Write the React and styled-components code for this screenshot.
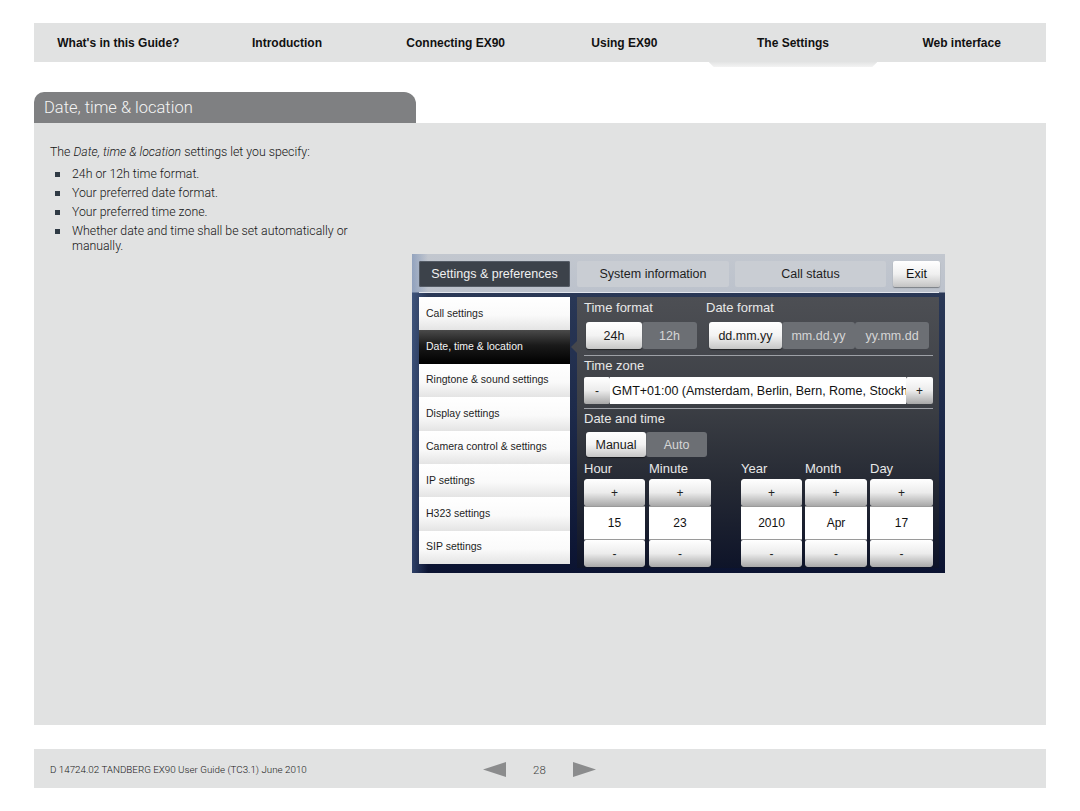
import React from 'react';
import styled, { createGlobalStyle, css } from 'styled-components';

const Global = createGlobalStyle`
  html, body { margin: 0; padding: 0; background: #ffffff; }
  body { font-family: "Liberation Sans", Arial, sans-serif; }
  * { box-sizing: border-box; }
`;

const Page = styled.div`
  width: 1046px;
  padding: 23px 0 0 34px;
`;

const Nav = styled.nav`
  display: grid;
  grid-template-columns: repeat(6, 1fr);
  height: 39px;
  background: #e1e2e2;
`;

const NavItem = styled.div`
  position: relative;
  display: flex;
  align-items: center;
  justify-content: center;
  padding-top: 1px;
  font-weight: 700;
  font-size: 12px;
  color: #111;
  ${p => p.$active && css`
    &::after {
      content: '';
      position: absolute;
      left: 0;
      right: 0;
      top: 100%;
      height: 5px;
      background: linear-gradient(#e3e4e4, #f3f3f3);
      clip-path: polygon(0 0, 100% 0, 97% 100%, 3% 100%);
    }
  `}
`;

const SectionTab = styled.h1`
  margin: 30px 0 0;
  width: 382px;
  height: 31px;
  padding: 0 10px;
  display: flex;
  align-items: center;
  background: #7f8082;
  color: #f4f4f4;
  border-radius: 10px 12px 0 0;
  font-family: Roboto, "Liberation Sans", sans-serif;
  font-weight: 300;
  font-size: 16.5px;
`;

const Panel = styled.section`
  height: 602px;
  background: #e1e2e2;
  display: grid;
  grid-template-columns: 362px 533px;
  align-items: start;
  padding: 22px 0 0 16px;
`;

const Intro = styled.div`
  font-family: Roboto, "Liberation Sans", sans-serif;
  font-weight: 300;
  font-size: 12.3px;
  line-height: 15px;
  color: #141414;
  width: 320px;
`;

const Lead = styled.p`
  margin: 0 0 7px;
`;

const Bullets = styled.ul`
  list-style: none;
  margin: 0;
  padding: 0;
`;

const Bullet = styled.li`
  position: relative;
  padding-left: 22px;
  margin-bottom: 4px;
  &::before {
    content: '';
    position: absolute;
    left: 5px;
    top: 5px;
    width: 4.5px;
    height: 4.5px;
    background: #2f3a44;
  }
`;

/* ---------- device screenshot ---------- */

const Screen = styled.div`
  margin-top: 109px;
  width: 533px;
  height: 319px;
  display: flex;
  flex-direction: column;
  background:
    linear-gradient(90deg, rgba(90, 120, 170, 0.45), rgba(90, 120, 170, 0) 3%),
    linear-gradient(180deg, #c2c7cf 0px, #bcc2cc 38px, #2a3856 39px, #1d2a4a 50%, #0b1331 100%);
  font-family: "Liberation Sans", Arial, sans-serif;
`;

const TopBar = styled.div`
  height: 38px;
  display: flex;
  gap: 6px;
  padding: 7px 5px 0 7px;
`;

const TopTab = styled.div`
  height: 26px;
  width: ${p => p.$w}px;
  margin-left: ${p => p.$ml || 0}px;
  display: flex;
  align-items: center;
  justify-content: center;
  font-size: 12.5px;
  border-radius: 2px;
  ${p => p.$variant === 'active' && css`
    background: #3c424a;
    color: #f0f0f0;
    box-shadow: inset 0 0 0 1px #555c66;
  `}
  ${p => p.$variant === 'normal' && css`
    background: #c9cdd3;
    color: #1e1e1e;
  `}
  ${p => p.$variant === 'exit' && css`
    background: linear-gradient(#ffffff, #f0f0f0 50%, #c4c4c4);
    color: #111;
    box-shadow: 0 1px 1px rgba(0, 0, 0, 0.35);
  `}
`;

const TopRule = styled.div`
  height: 1px;
  margin: 0 6px 0 7px;
  background: #e4e7ee;
`;

const Body = styled.div`
  display: flex;
  gap: 7px;
  padding: 4px 6px 0 7px;
`;

const SideList = styled.div`
  width: 151px;
  height: 267px;
  display: flex;
  flex-direction: column;
`;

const SideItem = styled.div`
  flex: 1;
  display: flex;
  align-items: center;
  padding: 0 7px 2px;
  font-size: 10.5px;
  ${p => p.$selected ? css`
    background: linear-gradient(#4a4a4a, #1a1a1a 45%, #000000);
    color: #f4f4f4;
  ` : css`
    background: linear-gradient(#ffffff, #fafafa 55%, #e4e4e4);
    color: #1e1e1e;
  `}
`;

const Settings = styled.div`
  position: relative;
  width: 362px;
  height: 271px;
  padding: 3px 6px 0 7px;
  background: linear-gradient(180deg, #4d4f54 0%, #3c3f45 40%, #262a34 68%, #0e1429 100%);
  &::before {
    content: '';
    position: absolute;
    left: -6px;
    top: 44px;
    border-style: solid;
    border-width: 6px 6px 6px 0;
    border-color: transparent #45474c transparent transparent;
  }
`;

const Label = styled.div`
  height: 16px;
  line-height: 16px;
  font-size: 13px;
  color: #e8e8e8;
  margin-top: ${p => p.$mt || 0}px;
`;

const FormatRow = styled.div`
  display: grid;
  grid-template-columns: 122px 1fr;
`;

const Toggle = styled.div`
  display: flex;
  margin-top: ${p => p.$mt}px;
  margin-left: ${p => p.$ml || 2}px;
  height: ${p => p.$h}px;
`;

const Opt = styled.div`
  width: ${p => p.$w}px;
  display: flex;
  align-items: center;
  justify-content: center;
  font-size: 12.5px;
  border-radius: 3px;
  ${p => p.$on ? css`
    background: linear-gradient(#ffffff, #f3f3f3 50%, #c6c6c6);
    color: #1a1a1a;
    box-shadow: 0 1px 1px rgba(0, 0, 0, 0.5);
    position: relative;
  ` : css`
    background: #6c6f74;
    color: #d6d6d6;
  `}
`;

const Divider = styled.div`
  height: 1px;
  margin-top: ${p => p.$mt}px;
  background: #9da0a6;
`;

const ZoneRow = styled.div`
  display: flex;
  height: 27px;
  margin-top: 3px;
`;

const StepBtn = styled.div`
  flex: none;
  width: ${p => p.$w}px;
  height: ${p => p.$h || 27}px;
  display: flex;
  align-items: center;
  justify-content: center;
  font-size: 12px;
  color: #222;
  background: linear-gradient(#ffffff, #ececec 50%, #a8a8a8);
  border-radius: 2px;
`;

const ZoneField = styled.div`
  flex: none;
  width: 296px;
  padding: 0 2px;
  display: flex;
  align-items: center;
  background: #ffffff;
  font-size: 12.5px;
  color: #111;
  white-space: nowrap;
  overflow: hidden;
`;

const Spinners = styled.div`
  display: flex;
  margin-top: 4px;
`;

const SpinCol = styled.div`
  width: ${p => p.$w}px;
  margin-left: ${p => p.$ml || 0}px;
  display: flex;
  flex-direction: column;
`;

const SpinStack = styled.div`
  margin-top: 2px;
  display: flex;
  flex-direction: column;
  border-radius: 3px;
  overflow: hidden;
`;

const SpinValue = styled.div`
  height: 34px;
  display: flex;
  align-items: center;
  justify-content: center;
  background: #ffffff;
  font-size: 12px;
  color: #111;
  border-top: 1px solid #9a9a9a;
  border-bottom: 1px solid #9a9a9a;
`;

/* ---------- footer ---------- */

const Footer = styled.footer`
  margin-top: 24px;
  height: 39px;
  background: #e1e2e2;
  display: flex;
  align-items: center;
  padding: 2px 0 0 16px;
`;

const FootText = styled.div`
  width: 433px;
  font-family: Roboto, "Liberation Sans", sans-serif;
  font-weight: 300;
  font-size: 9.8px;
  color: #1a1a1a;
`;

const Pager = styled.div`
  display: flex;
  align-items: center;
  gap: 27px;
  font-family: Roboto, "Liberation Sans", sans-serif;
  font-weight: 300;
  font-size: 11.5px;
  color: #444;
`;

const Arrow = ({ dir }) => (
  <svg width="23" height="15" viewBox="0 0 23 15">
    {dir === 'left'
      ? <polygon points="0,7.5 23,0 23,15" fill="#8b8c8d" />
      : <polygon points="23,7.5 0,0 0,15" fill="#8b8c8d" />}
  </svg>
);

const navItems = ["What's in this Guide?", 'Introduction', 'Connecting EX90', 'Using EX90', 'The Settings', 'Web interface'];
const sideItems = ['Call settings', 'Date, time & location', 'Ringtone & sound settings', 'Display settings', 'Camera control & settings', 'IP settings', 'H323 settings', 'SIP settings'];
const spinCols = [
  { label: 'Hour', value: '15', w: 61, ml: 0 },
  { label: 'Minute', value: '23', w: 62, ml: 4 },
  { label: 'Year', value: '2010', w: 61, ml: 30 },
  { label: 'Month', value: 'Apr', w: 62, ml: 3 },
  { label: 'Day', value: '17', w: 63, ml: 3 },
];

export default function App() {
  return (
    <Page>
      <Global />
      <Nav>
        {navItems.map(n => (
          <NavItem key={n} $active={n === 'The Settings'}>{n}</NavItem>
        ))}
      </Nav>

      <SectionTab>Date, time &amp; location</SectionTab>
      <Panel>
        <Intro>
          <Lead>The <em>Date, time &amp; location</em> settings let you specify:</Lead>
          <Bullets>
            <Bullet>24h or 12h time format.</Bullet>
            <Bullet>Your preferred date format.</Bullet>
            <Bullet>Your preferred time zone.</Bullet>
            <Bullet>Whether date and time shall be set automatically or manually.</Bullet>
          </Bullets>
        </Intro>

        <Screen>
          <TopBar>
            <TopTab $w={151} $variant="active">Settings &amp; preferences</TopTab>
            <TopTab $w={152} $ml={1} $variant="normal">System information</TopTab>
            <TopTab $w={151} $variant="normal">Call status</TopTab>
            <TopTab $w={47} $ml={1} $variant="exit">Exit</TopTab>
          </TopBar>
          <TopRule />
          <Body>
            <SideList>
              {sideItems.map(s => (
                <SideItem key={s} $selected={s === 'Date, time & location'}>{s}</SideItem>
              ))}
            </SideList>
            <Settings>
              <FormatRow>
                <div>
                  <Label>Time format</Label>
                  <Toggle $mt={6} $h={27}>
                    <Opt $w={56} $on>24h</Opt>
                    <Opt $w={55}>12h</Opt>
                  </Toggle>
                </div>
                <div>
                  <Label>Date format</Label>
                  <Toggle $mt={6} $h={27} $ml={3}>
                    <Opt $w={73} $on>dd.mm.yy</Opt>
                    <Opt $w={73}>mm.dd.yy</Opt>
                    <Opt $w={74}>yy.mm.dd</Opt>
                  </Toggle>
                </div>
              </FormatRow>
              <Divider $mt={6} />
              <Label $mt={2}>Time zone</Label>
              <ZoneRow>
                <StepBtn $w={26}>-</StepBtn>
                <ZoneField>GMT+01:00 (Amsterdam, Berlin, Bern, Rome, Stockholm, Vienna)</ZoneField>
                <StepBtn $w={27}>+</StepBtn>
              </ZoneRow>
              <Divider $mt={4} />
              <Label $mt={2}>Date and time</Label>
              <Toggle $mt={5} $h={25}>
                <Opt $w={60} $on>Manual</Opt>
                <Opt $w={61}>Auto</Opt>
              </Toggle>
              <Spinners>
                {spinCols.map(c => (
                  <SpinCol key={c.label} $w={c.w} $ml={c.ml}>
                    <Label>{c.label}</Label>
                    <SpinStack>
                      <StepBtn $w={c.w} $h={27}>+</StepBtn>
                      <SpinValue>{c.value}</SpinValue>
                      <StepBtn $w={c.w} $h={27}>-</StepBtn>
                    </SpinStack>
                  </SpinCol>
                ))}
              </Spinners>
            </Settings>
          </Body>
        </Screen>
      </Panel>

      <Footer>
        <FootText>D 14724.02 TANDBERG EX90 User Guide (TC3.1) June 2010</FootText>
        <Pager>
          <Arrow dir="left" />
          <span>28</span>
          <Arrow dir="right" />
        </Pager>
      </Footer>
    </Page>
  );
}
